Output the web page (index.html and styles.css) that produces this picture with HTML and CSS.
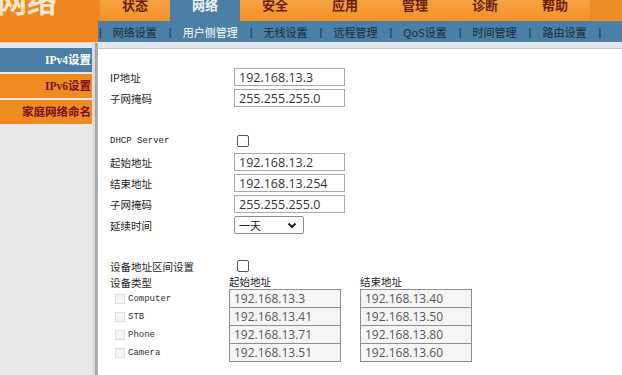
FILE: index.html
```html
<!DOCTYPE html>
<html lang="zh-CN">

<head>
    <meta charset="UTF-8" />
    <title>网络 - 用户侧管理</title>
    <link rel="stylesheet" href="styles.css">
</head>

<body>
    <div class="page">
        <div class="left">
            <div class="brand"><span class="brand-text">网络</span></div>
            <div class="left-body">
                <ul class="side">
                    <li class="side-item active">IPv4设置</li>
                    <li class="side-item">IPv6设置</li>
                    <li class="side-item">家庭网络命名</li>
                </ul>
                <div class="divider"></div>
            </div>
        </div>

        <div class="right">
            <div class="tabs">
                <div class="tab">状态</div>
                <div class="tab active">网络</div>
                <div class="tab">安全</div>
                <div class="tab">应用</div>
                <div class="tab">管理</div>
                <div class="tab">诊断</div>
                <div class="tab">帮助</div>
            </div>
            <div class="subnav">
                <span class="sep">|</span><span class="sub">网络设置</span>
                <span class="sep">|</span><span class="sub active">用户侧管理</span>
                <span class="sep">|</span><span class="sub">无线设置</span>
                <span class="sep">|</span><span class="sub">远程管理</span>
                <span class="sep">|</span><span class="sub">QoS设置</span>
                <span class="sep">|</span><span class="sub">时间管理</span>
                <span class="sep">|</span><span class="sub">路由设置</span>
                <span class="sep">|</span>
            </div>
            <div class="strip"></div>

            <div class="content">
                <div class="row">
                    <label class="label">IP地址</label>
                    <input class="field" type="text" value="192.168.13.3">
                </div>
                <div class="row">
                    <label class="label">子网掩码</label>
                    <input class="field" type="text" value="255.255.255.0">
                </div>

                <div class="row group">
                    <label class="label mono">DHCP Server</label>
                    <span class="check"></span>
                </div>
                <div class="row">
                    <label class="label">起始地址</label>
                    <input class="field" type="text" value="192.168.13.2">
                </div>
                <div class="row">
                    <label class="label">结束地址</label>
                    <input class="field" type="text" value="192.168.13.254">
                </div>
                <div class="row">
                    <label class="label">子网掩码</label>
                    <input class="field" type="text" value="255.255.255.0">
                </div>
                <div class="row">
                    <label class="label">延续时间</label>
                    <div class="select">
                        <span>一天</span>
                        <svg width="10" height="7" viewBox="0 0 10 7">
                            <path d="M1.5 1.5 L5 5 L8.5 1.5" fill="none" stroke="#222" stroke-width="2" />
                        </svg>
                    </div>
                </div>

                <div class="row group wide">
                    <label class="label">设备地址区间设置</label>
                    <span class="check"></span>
                </div>

                <div class="range">
                    <div class="range-head">
                        <span class="col-type">设备类型</span>
                        <span class="col-start">起始地址</span>
                        <span class="col-end">结束地址</span>
                    </div>
                    <div class="range-row">
                        <span class="col-type"><span class="mini-check"></span><span class="mono">Computer</span></span>
                        <input class="cell" type="text" value="192.168.13.3" disabled>
                        <input class="cell end" type="text" value="192.168.13.40" disabled>
                    </div>
                    <div class="range-row">
                        <span class="col-type"><span class="mini-check"></span><span class="mono">STB</span></span>
                        <input class="cell" type="text" value="192.168.13.41" disabled>
                        <input class="cell end" type="text" value="192.168.13.50" disabled>
                    </div>
                    <div class="range-row">
                        <span class="col-type"><span class="mini-check"></span><span class="mono">Phone</span></span>
                        <input class="cell" type="text" value="192.168.13.71" disabled>
                        <input class="cell end" type="text" value="192.168.13.80" disabled>
                    </div>
                    <div class="range-row">
                        <span class="col-type"><span class="mini-check"></span><span class="mono">Camera</span></span>
                        <input class="cell" type="text" value="192.168.13.51" disabled>
                        <input class="cell end" type="text" value="192.168.13.60" disabled>
                    </div>
                </div>
            </div>
        </div>
    </div>
</body>

</html>
```

FILE: styles.css
```css
* {
    box-sizing: border-box;
    margin: 0;
    padding: 0;
}

body {
    font-family: 'Noto Sans CJK SC', sans-serif;
    font-size: 10.5px;
    color: #222;
    background: #fff;
    height: 100vh;
    overflow: hidden;
}

.page {
    display: flex;
    height: 100vh;
}

/* left column */
.left {
    width: 98px;
    display: flex;
    flex-direction: column;
}

.brand {
    height: 43px;
    background: #f0871e;
    border-bottom: 1px solid #f7d3ae;
    overflow: hidden;
}

.brand-text {
    display: block;
    margin-top: -16px;
    margin-left: -3px;
    font-size: 30px;
    font-weight: 700;
    line-height: 30px;
    color: #fbe6cf;
}

.left-body {
    flex: 1;
    display: flex;
}

.side {
    list-style: none;
    width: 92px;
    background: #e8e8e8;
    padding-top: 5px;
}

.side-item {
    height: 24px;
    margin-bottom: 2px;
    line-height: 24px;
    text-align: right;
    padding-right: 1px;
    background: #f08b20;
    color: #7a0f0f;
    font-family: 'Liberation Serif', 'Noto Sans CJK SC', serif;
    font-size: 11.5px;
    font-weight: 700;
    white-space: nowrap;
    overflow: hidden;
}

.side-item.active {
    background: #4c7fa5;
    color: #fff;
}

.divider {
    width: 6px;
    background: linear-gradient(to right, #dcdcdc 0, #dcdcdc 3px, #9c9c9c 3px, #b5b5b5 100%);
}

/* right column */
.right {
    flex: 1;
    display: flex;
    flex-direction: column;
}

.tabs {
    display: flex;
    height: 21px;
    padding-left: 2px;
    background: #ee8a24;
    overflow: hidden;
}

.tab {
    width: 70px;
    padding-top: 1px;
    text-align: center;
    font-size: 13px;
    font-weight: 700;
    line-height: 8px;
    color: #6a1c06;
    background: linear-gradient(#f6a340, #f29227);
}

.tab.active {
    background: #4c7fa5;
    color: #f1f5f8;
}

.subnav {
    height: 21px;
    display: flex;
    align-items: center;
    background: #4c7fa5;
    color: #1b2a38;
    font-size: 11px;
    white-space: nowrap;
}

.sep {
    padding: 0 11px 0 1px;
    font-family: 'Liberation Sans', sans-serif;
    color: #1b2a38;
}

.sub {
    padding-right: 11px;
}

.sub.active {
    color: #fff;
}

.strip {
    height: 7px;
    background: #e1e7ec;
    border-bottom: 1px solid #c4c4c4;
}

/* form */
.content {
    flex: 1;
    padding: 19px 0 0 12px;
}

.row {
    display: flex;
    align-items: center;
    height: 18px;
    margin-bottom: 3px;
}

.row.group {
    margin-top: 25px;
}

.row.group.wide {
    margin-top: 23px;
}

.label {
    width: 124px;
}

.mono {
    font-family: 'Liberation Mono', monospace;
    font-size: 9px;
}

.field {
    width: 111px;
    height: 18px;
    padding: 0 4px;
    border: 1px solid #a8a8a8;
    font-family: 'Open Sans', sans-serif;
    font-size: 12.5px;
    color: #333;
    background: #fff;
}

.check {
    width: 12px;
    height: 12px;
    margin-left: 3px;
    border: 1px solid #555;
    border-radius: 2px;
    background: #fff;
}

.select {
    width: 70px;
    height: 18px;
    display: flex;
    align-items: center;
    justify-content: space-between;
    padding: 0 6px 0 4px;
    border: 1px solid #8c8c8c;
    border-radius: 2px;
    font-size: 11px;
    color: #222;
}

.range-head {
    display: flex;
    height: 13px;
    line-height: 12px;
    margin-top: -2px;
}

.col-type {
    width: 119px;
    display: flex;
    align-items: center;
}

.col-start {
    width: 131px;
}

.range-row {
    display: flex;
    align-items: center;
    height: 19px;
    margin-top: -1px;
}

.range-head + .range-row {
    margin-top: 0;
}

.range-row .col-type {
    padding-left: 5px;
}

.range-row .mono {
    color: #333;
}

.mini-check {
    width: 10px;
    height: 10px;
    margin-right: 3px;
    border: 1px solid #dcdcdc;
    background: #f3f3f3;
}

.cell {
    width: 112px;
    height: 19px;
    padding: 0 4px;
    border: 1px solid #8e8e8e;
    background: #f5f5f5;
    font-family: 'Open Sans', sans-serif;
    font-size: 12px;
    color: #555;
}

.cell.end {
    margin-left: 19px;
}
```
